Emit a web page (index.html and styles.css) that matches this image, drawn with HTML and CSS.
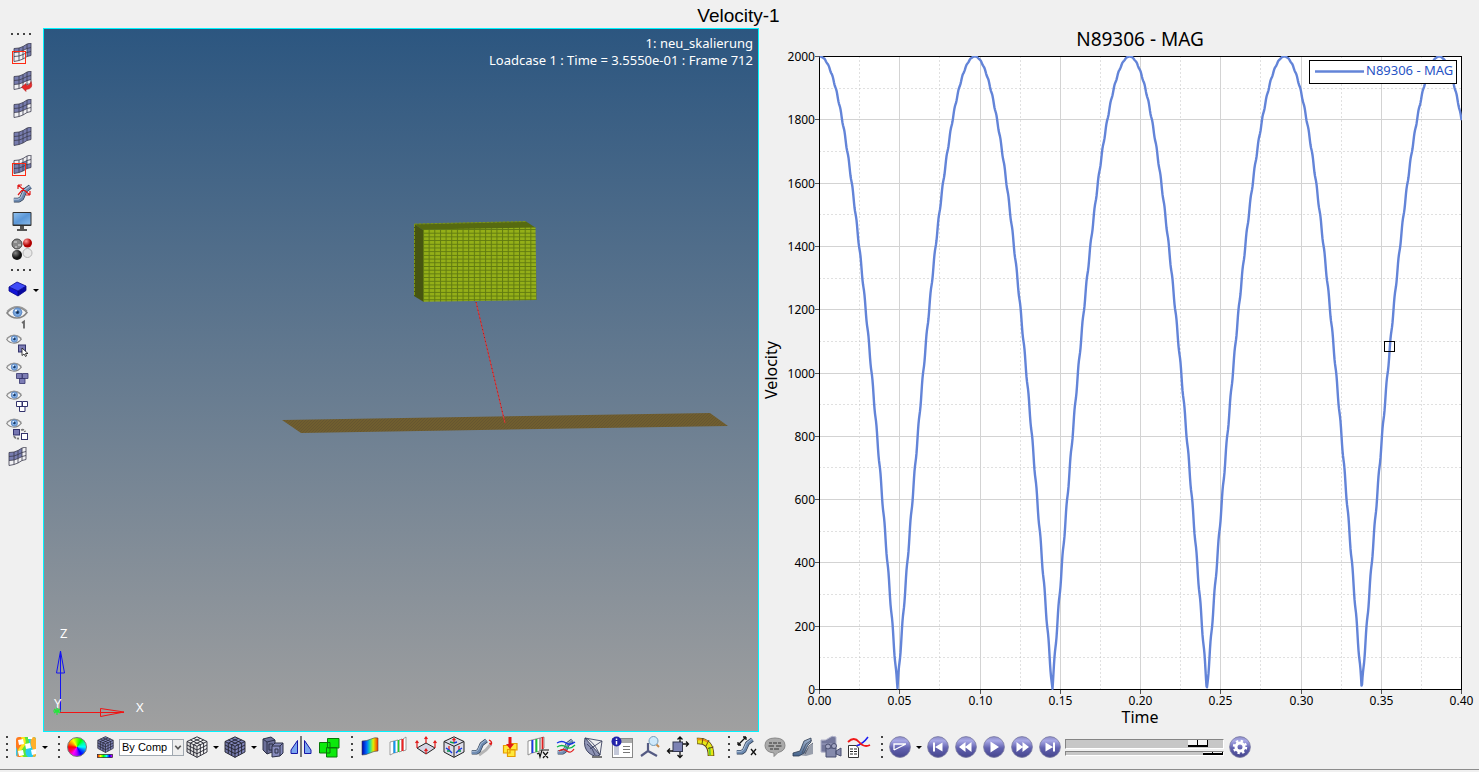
FILE: index.html
```html
<!DOCTYPE html>
<html lang="en">
<head>
<meta charset="utf-8">
<title>Velocity-1</title>
<link rel="stylesheet" href="styles.css">
</head>
<body>
<svg class="defs" aria-hidden="true">
  <defs>
    <linearGradient id="ball" x1="0" y1="0" x2="0" y2="1"><stop offset="0" stop-color="#8c8cc8"/><stop offset=".2" stop-color="#a9a9e6"/><stop offset=".55" stop-color="#6262b0"/><stop offset="1" stop-color="#45458c"/></linearGradient>
    <linearGradient id="rainbow"><stop offset="0" stop-color="#0000b0"/><stop offset=".3" stop-color="#0070ff"/><stop offset=".5" stop-color="#20e0a0"/><stop offset=".7" stop-color="#e0f000"/><stop offset="1" stop-color="#ff3000"/></linearGradient>
    <linearGradient id="spectrum"><stop offset="0" stop-color="red"/><stop offset=".2" stop-color="#ff0"/><stop offset=".4" stop-color="#0f0"/><stop offset=".6" stop-color="#0ff"/><stop offset=".8" stop-color="#00f"/><stop offset="1" stop-color="#f0f"/></linearGradient>
    <linearGradient id="steel" x1="0" y1="0" x2="0" y2="1"><stop offset="0" stop-color="#a3b6cf"/><stop offset="1" stop-color="#45638c"/></linearGradient>
    <linearGradient id="sky" x1="0" y1="0" x2="1" y2="1"><stop offset="0" stop-color="#8fc0ee"/><stop offset=".5" stop-color="#5b97d8"/><stop offset="1" stop-color="#86b8e8"/></linearGradient>
    <radialGradient id="iris"><stop offset="0" stop-color="#123"/><stop offset=".3" stop-color="#2c5590"/><stop offset=".5" stop-color="#85b4ea"/><stop offset="1" stop-color="#5a83bd"/></radialGradient>
    <radialGradient id="dark" cx=".35" cy=".3"><stop offset="0" stop-color="#888"/><stop offset="1" stop-color="#111"/></radialGradient>
    <radialGradient id="red" cx=".35" cy=".3"><stop offset="0" stop-color="#ff9a9a"/><stop offset="1" stop-color="#b00000"/></radialGradient>
    <symbol id="sheet-lines" viewBox="0 0 22 22"><path d="M3 5.500L8 5 12 3.500 16 1 20 0M3 9.500L8 9 12 7.500 16 5.500 20 4.500M3 13.500L8 13 12 11.500 16 9.500 20 8.500M3 18.500L8 17.500 12 16 16 13.500 20 12.500M3 5.500V18.500M8 5V17.500M12 3.500V16M16 1V13.500M20 0V12.500" fill="none" stroke="#3b3b4c" stroke-width=".8"/></symbol>
    <symbol id="sheet" viewBox="0 0 22 22"><path d="M3 5.500L8 5 12 3.500 16 1 20 0V12.500L16 13.500 12 16 8 17.500 3 18.500Z" fill="#f1f1f4"/></symbol>
    <symbol id="eye" viewBox="0 0 22 14"><path d="M1 7Q5 1.500 11 1.500T21 6.500Q17 12 11 12T1 7Z" fill="#f4f4f4" stroke="#858585" stroke-width="1.600"/><path d="M1 5.500Q6 .8 11 .8T21 5" fill="none" stroke="#999" stroke-width="1.400"/><circle cx="11.500" cy="6.300" r="4.800" fill="url(#iris)"/><circle cx="10" cy="4.500" r="1" fill="#fff"/></symbol>
    <symbol id="cube" viewBox="0 0 22 22"><path d="M1 5.500L11 .8 21 5.500V16L11 21.400 1 16Z" fill="currentColor"/><path d="M1 5.500L11 10.300V21.400L1 16Z" fill="#000" fill-opacity=".1"/><path d="M1 5.500L11 .8 21 5.500V16L11 21.400 1 16ZM1 5.500L11 10.300 21 5.500M11 10.300V21.400M4.300 4L14.300 8.700V19.600M7.700 2.400L17.600 7.100V17.800M17.700 4L7.700 8.700V19.600M14.300 2.400L4.300 7.100V17.800M1 9L11 14 21 9M1 12.500L11 17.700 21 12.500" fill="none" stroke="#22222e" stroke-width=".9"/></symbol>
    <symbol id="disc" viewBox="0 0 22 22"><circle cx="11" cy="11" r="10.400" fill="url(#ball)" stroke="#77779f" stroke-width=".8"/></symbol>
    <symbol id="tube" viewBox="0 0 22 22"><path d="M1 18H7L10 16 14 7 20 2.500" fill="none" stroke="#2c3b50" stroke-width="5.600" stroke-linejoin="round"/><path d="M1 18H7L10 16 14 7 20 2.500" fill="none" stroke="#6d8ab0" stroke-width="4" stroke-linejoin="round"/><path d="M1 17H6L9 15 13 6.500 19 2" fill="none" stroke="#adc0d8" stroke-width="1.200"/></symbol>
  </defs>
</svg>

<h1 class="page-title">Velocity-1</h1>

<main class="workspace">
  <nav class="side" aria-label="Visibility tools">
    <span class="grip grip-row"><i></i><i></i><i></i><i></i></span>
    <button class="tool" aria-label="Mask window"><svg viewBox="0 0 22 22"><use href="#sheet"/><path d="M3 5.500L8 5 12 3.500 16 1 20 0V12.500L16 13.500V5.500L12 7.500 8 9 3 9.500Z" fill="#777caf"/><use href="#sheet-lines"/><rect x="1.500" y="8.500" width="13" height="12" fill="none" stroke="#ff2a14"/></svg></button>
    <button class="tool" aria-label="Reverse mask"><svg viewBox="0 0 22 22"><use href="#sheet"/><path d="M3 5.500L8 5 12 3.500 16 1 20 0V8.500L12 11.500 8 13V13L3 13.500Z" fill="#777caf"/><use href="#sheet-lines"/><path d="M10.500 16L15 12.500V14.500Q19 15 20 10.500 23 18 15 18.500V20.500Z" fill="#e52b2b" stroke="#b01515" stroke-width=".5"/></svg></button>
    <button class="tool" aria-label="Mask selection"><svg viewBox="0 0 22 22"><use href="#sheet"/><path d="M3 5.500L8 5 12 3.500 16 1 20 0V4.500L16 5.500V9.500L12 11.500 8 13 3 13.500Z" fill="#777caf"/><use href="#sheet-lines"/></svg></button>
    <button class="tool" aria-label="Show all"><svg viewBox="0 0 22 22"><path d="M3 5.500L8 5 12 3.500 16 1 20 0V12.500L16 13.500 12 16 8 17.500 3 18.500Z" fill="#777caf"/><use href="#sheet-lines"/></svg></button>
    <button class="tool" aria-label="Unmask window"><svg viewBox="0 0 22 22"><use href="#sheet"/><path d="M3 9.500L8 9 12 7.500 16 5.500V9.500L20 8.500V12.500L16 13.500 12 16 8 17.500 3 18.500Z" fill="#777caf"/><use href="#sheet-lines"/><rect x="1.500" y="8.500" width="13" height="12" fill="none" stroke="#ff2a14"/></svg></button>
    <button class="tool" aria-label="Measure path"><svg viewBox="0 0 22 22"><use href="#tube" x="2" y="1" width="19" height="20"/><path d="M7 2L19 12M7 2H11M7 2V6M19 12V8M19 12H15M7 12L13 5" stroke="#e01818" stroke-width="1.200" fill="none"/></svg></button>
    <button class="tool" aria-label="Display"><svg viewBox="0 0 22 22"><rect x="1.500" y="1" width="19" height="14" rx="1" fill="#303030"/><rect x="2.500" y="2" width="17" height="11.500" fill="url(#sky)"/><path d="M9 15H13V18H16V20H6V18H9Z" fill="#555"/></svg></button>
    <button class="tool" aria-label="Materials"><svg viewBox="0 0 22 22"><circle cx="6" cy="5" r="5" fill="#888" stroke="#444"/><path d="M3 3H6M7 6H10M4 8H6" stroke="#ddd"/><circle cx="16.500" cy="4" r="4.500" fill="url(#red)"/><circle cx="6" cy="16" r="5" fill="url(#dark)"/><circle cx="16.500" cy="14" r="4.500" fill="#e8e8e8" stroke="#b5b5b5"/></svg></button>
    <span class="grip grip-row"><i></i><i></i><i></i><i></i></span>
    <div class="side-group">
      <div class="tool-row"><button class="tool" aria-label="Shaded part"><svg viewBox="0 0 22 22"><path d="M3 8L11 3 20 7 12 12Z" fill="#3f4bf8"/><path d="M3 8V12L12 17V12Z" fill="#1414d8"/><path d="M12 12V17L20 11.500V7Z" fill="#0808a0"/><path d="M3 8L11 3 20 7V11.500L12 17 3 12ZM3 8L12 12 20 7M12 12V17" fill="none" stroke="#05058a" stroke-width=".8"/></svg></button><button class="caret" aria-label="Shading options"></button></div>
      <button class="tool" aria-label="Isolate one"><svg viewBox="0 0 22 22"><use href="#eye" x="0" y="-1" width="22" height="14"/><path d="M16 16L18 14.500V21.500" fill="none" stroke="#666" stroke-width="1.800"/></svg></button>
      <button class="tool" aria-label="Hide picked"><svg viewBox="0 0 22 22"><use href="#eye" x="0" y="-1" width="16" height="11"/><rect x="12.500" y="10" width="7" height="7" fill="#7d7db5" stroke="#33336c"/><path d="M16 13V20.500L18 19 19.500 21.500 20.500 21 19.500 18.500H22Z" fill="#fff" stroke="#111" stroke-width=".8"/></svg></button>
      <button class="tool" aria-label="Show linked"><svg viewBox="0 0 22 22"><use href="#eye" x="0" y="-1" width="16" height="11"/><path d="M10.500 10.500H16V15.500H10.500ZM16.500 10.500H22V15.500H16.500ZM13.500 15.500H19V20.500H13.500Z" fill="#7d7db5" stroke="#33336c" stroke-width=".8"/></svg></button>
      <button class="tool" aria-label="Hide linked"><svg viewBox="0 0 22 22"><use href="#eye" x="0" y="-1" width="16" height="11"/><path d="M10.500 10.500H16V15.500H10.500ZM16.500 10.500H21.500V15.500H16.500ZM13.500 15.500H19V20.500H13.500Z" fill="#fff" stroke="#33336c"/></svg></button>
      <button class="tool" aria-label="Swap visibility"><svg viewBox="0 0 22 22"><use href="#eye" x="0" y="-1" width="16" height="11"/><rect x="7.500" y="10.500" width="6" height="5.500" fill="#7777b2" stroke="#33336c"/><rect x="15.500" y="14.500" width="6" height="6" fill="#fff" stroke="#33336c"/><path d="M15 11Q18.500 10 19 13M8 17Q9 20 13 19.500" fill="none" stroke="#777" stroke-width="1.800" stroke-dasharray="3 1"/></svg></button>
      <button class="tool" aria-label="Element mask"><svg viewBox="0 0 22 22"><use href="#sheet"/><path d="M3 5.500L8 5 12 3.500 16 1V9.500L12 11.500 8 13 3 13.500Z" fill="#777caf"/><use href="#sheet-lines"/></svg></button>
    </div>
  </nav>

  <section class="viewport" aria-label="Model view">
    <svg class="scene" viewBox="44 29 714 702" preserveAspectRatio="none">
      <defs><pattern id="mesh" x="423" y="229" width="5.650" height="3.700" patternUnits="userSpaceOnUse"><rect width="5.650" height="3.700" fill="#94af18"/><path d="M0 .5H5.650M.5 0V3.700" stroke="#607a10"/></pattern>
      <pattern id="plate" width="3" height="3" patternUnits="userSpaceOnUse"><rect width="3" height="3" fill="#705e2f"/><path d="M0 3L3 0" stroke="#615330" stroke-width=".7"/></pattern></defs>
      <path d="M282 420L710 413 728 426 301 433Z" fill="url(#plate)"/>
      <path d="M414 224L526 221.500 536 228 423 230Z" fill="#566a10"/>
      <path d="M414 224L423 230V301.500L414 296Z" fill="#475511"/>
      <path d="M423 229.500L535.500 227.500 536.500 300 423 301.800Z" fill="url(#mesh)"/>
      <path d="M414.500 224L526 221.500M414.500 224V296" fill="none" stroke="#7c9418" stroke-dasharray="3 1"/>
      <path d="M476 302L505 423" stroke="#e33a3a" stroke-width="1"/><path d="M476 302L505 423" stroke="#9c1c20" stroke-width="1" stroke-dasharray="1 3"/>
      <path d="M60.500 651V712" stroke="#1414f0"/><path d="M60.500 651L56.500 673H64.500Z" fill="none" stroke="#1414f0"/>
      <path d="M60 712.500H124" stroke="#f01414"/><path d="M124 712L100.500 708.500V716.500Z" fill="none" stroke="#f01414"/>
      <path d="M54 709L60 713M54 713L60 709M57 707V715M53 711H61" stroke="#22e83a" stroke-width="1.200"/>
      <g class="axis-names"><text x="60" y="638">Z</text><text x="54" y="708">Y</text><text x="136" y="712">X</text></g>
    </svg>
    <div class="view-info"><div>1: neu_skalierung</div><div>Loadcase 1 : Time = 3.5550e-01 : Frame 712</div></div>
  </section>

  <section class="chart" aria-label="Velocity plot">
    <svg class="plot" viewBox="759 28 720 704" preserveAspectRatio="none">
      <clipPath id="area"><rect x="819" y="56" width="643" height="634"/></clipPath>
      <rect x="819.500" y="56.500" width="642" height="633" fill="#fff"/>
      <path id="minor" class="minor"/><path id="major" class="major"/>
      <rect class="frame" x="819.500" y="56.500" width="642" height="633"/>
      <path id="ticks" class="ticks"/>
      <path id="curve" class="curve" clip-path="url(#area)"/>
      <rect x="1384.500" y="341.500" width="10" height="10" fill="none" stroke="#000"/>
      <rect x="1309.500" y="60.500" width="147" height="23" fill="#fff" stroke="#000"/>
      <path class="curve" d="M1315 71.500H1364"/>
      <text class="legend" x="1366" y="75">N89306 - MAG</text>
      <text class="chart-title" x="1140" y="46">N89306 - MAG</text>
      <text class="axis-title" x="1140" y="723">Time</text>
      <text class="axis-title" transform="translate(777 370) rotate(-90)">Velocity</text>
      <g id="xlabels" class="xlabels"></g><g id="ylabels" class="ylabels"></g>
    </svg>
  </section>
</main>

<footer class="bottom">
  <span class="grip first"><i></i><i></i><i></i><i></i></span>
  <button class="tool" aria-label="Contour"><svg viewBox="0 0 22 22"><clipPath id="tile"><rect x="1" y="1" width="20" height="20" rx="3"/></clipPath><g clip-path="url(#tile)"><path d="M0 0H22V22H0Z" fill="#ff7a1c"/><path d="M5 0Q10 6 5 11T7 22H22V0Z" fill="#ffe81c"/><path d="M9 0Q13 7 8 12T10 22H22V0Z" fill="#5be63a"/><path d="M12 0Q16 7 12 12T14 22H22V0Z" fill="#23cdf0"/><path d="M17 0Q14 7 17 12T17 22H22V0Z" fill="#ffb02a"/><path d="M0 10Q4 13 2 22H0Z" fill="#35c9e8"/><path d="M3 4L8 3 9 8 4 9ZM10 8L15 7 16 12 11 13ZM3 15L8 14 9 19 4 20ZM16 14L21 13 21 18 17 19ZM13 0H18L17 3H13Z" fill="#fff"/></g></svg></button><button class="caret" aria-label="Contour options"></button>
  <span class="grip"><i></i><i></i><i></i><i></i></span>
  <button class="tool" aria-label="Colours"><span class="wheel"></span></button>
  <button class="tool" aria-label="Colour by"><svg viewBox="0 0 22 22"><use href="#cube" class="blue" x="3" y="0" width="17" height="17"/><rect x="3.500" y="18.500" width="15" height="3" fill="url(#spectrum)" stroke="#222" stroke-width=".7"/></svg></button>
  <label class="combo"><select aria-label="Colour mode"><option>By Comp</option></select><svg viewBox="0 0 11 16" aria-hidden="true"><path d="M2.500 6L5.500 9.500 8.500 6" fill="none" stroke="#555" stroke-width="1.800"/></svg></label>
  <button class="tool" aria-label="Wireframe"><svg viewBox="0 0 22 22"><use href="#cube" class="clear"/></svg></button><button class="caret" aria-label="Wireframe options"></button>
  <button class="tool" aria-label="Shaded mesh"><svg viewBox="0 0 22 22"><use href="#cube" class="blue"/></svg></button><button class="caret" aria-label="Mesh options"></button>
  <button class="tool" aria-label="Section"><svg viewBox="0 0 22 22"><path d="M1 3L9 1 13 4V15L5 18 1 14Z" fill="#6c7099" stroke="#2d3047"/><path d="M5 6L13 4M5 6V18M1 3L5 6M7 8H11V14H7Z" fill="none" stroke="#2d3047"/><path d="M10 10L13 7H21V17L18 20 10 21Z" fill="#858abb" stroke="#2d3047"/><path d="M10 10L18 10 21 7M18 10V20M13 13H16V17H13Z" fill="none" stroke="#2d3047"/></svg></button>
  <button class="tool" aria-label="Mirror"><svg viewBox="0 0 22 22"><path d="M1 17.500V14L7.500 4.500V17.500Z" fill="#7ba6f0" stroke="#1616a6"/><path d="M21 17.500V14L14.500 4.500V17.500Z" fill="#7ba6f0" stroke="#1616a6"/><path d="M11 0V21" stroke="#000"/></svg></button>
  <button class="tool" aria-label="Groups"><svg viewBox="0 0 22 22"><path d="M9.500 2.500H21V12H9.500ZM1.500 6.500H12V17H1.500ZM8.500 11.500H19V21H8.500Z" fill="#0cea0c" stroke="#097809" stroke-width="1"/></svg></button>
  <span class="grip"><i></i><i></i><i></i><i></i></span>
  <button class="tool" aria-label="Contour plot"><svg viewBox="0 0 22 22"><path d="M3 5Q8 5 12 3T19 2V15Q15 15 11 17T3 19Z" fill="url(#rainbow)" stroke="#444" stroke-width=".6"/></svg></button>
  <button class="tool" aria-label="Iso plot"><svg viewBox="0 0 22 22"><path d="M3 6L7 5V17L3 19ZM7 5L11 4V16L7 17ZM12 4L15 3V15L12 16ZM16 3L19 1V14L16 15Z" fill="#fff" stroke="#888" stroke-width=".8"/><path d="M7.500 5V17" stroke="#19e" stroke-width="2"/><path d="M11.500 4V16" stroke="#2c2" stroke-width="1.500"/><path d="M15.500 3V15" stroke="#e22" stroke-width="2"/></svg></button>
  <button class="tool" aria-label="Vector plot"><svg viewBox="0 0 22 22"><path d="M2 12L11 7 20 12 11 18Z" fill="#d5d5e5" stroke="#222"/><path d="M2 12V5M.500 7L2 5 3.500 7M20 12V5M18.500 7L20 5 21.500 7M11 7V1M9.500 3L11 1 12.500 3M11 18V13M9.500 15L11 13 12.500 15" fill="none" stroke="#e01818" stroke-width="1.200"/></svg></button>
  <button class="tool" aria-label="Tensor plot"><svg viewBox="0 0 22 22"><path d="M1 5.500L11 .8 21 5.500V16L11 21.400 1 16Z" fill="#dcdce8" stroke="#222"/><path d="M1 5.500L11 10.300 21 5.500M11 10.300V21" fill="none" stroke="#222"/><path d="M11 7V3M9.500 4L11 2.500 12.500 4M6 14V10M16 14V10" fill="none" stroke="#e01818" stroke-width="1.200"/><path d="M11 7L14 6M6 14L3 12M6 14L9 17M16 14L19 12M16 14L13 17" stroke="#1438e0" stroke-width="1.400"/><path d="M11 7L7 6M4 15H7M15 15H18" stroke="#0a9a4c" stroke-width="1.400"/></svg></button>
  <button class="tool" aria-label="Deformed shape"><svg viewBox="0 0 22 22"><path d="M8 19L15 14 20 8" fill="none" stroke="#b5b5b5" stroke-width="3"/><use href="#tube" x="0" y="2" width="17" height="18"/><path d="M18 4Q21 5 20.500 8M18.500 7L20.500 9" fill="none" stroke="#e01818" stroke-width="1.300"/></svg></button>
  <button class="tool" aria-label="Loads"><svg viewBox="0 0 22 22"><path d="M11.500 7.500H18V14H11.500ZM4.500 9.500H11V17H4.500ZM8.500 13.500H16V20.500H8.500Z" fill="#ffe93b" stroke="#e59b00" stroke-width="1.200"/><path d="M9.500 1H12.500V8H15L11 13 7 8H9.500Z" fill="#e01818"/></svg></button>
  <button class="tool" aria-label="Derived result"><svg viewBox="0 0 22 22"><path d="M1 5L5 4V17L1 19ZM5 4L9 3V16L5 17ZM9 3L13 2V15L9 16ZM13 2L17 1V12L13 15Z" fill="#fff" stroke="#777" stroke-width=".8"/><path d="M5.500 4V17" stroke="#1c38e8" stroke-width="1.800"/><path d="M9.500 3V16" stroke="#1bc43a" stroke-width="1.800"/><path d="M15.500 1V13" stroke="#e02222" stroke-width="1.800"/><path d="M10 18L12 17 13 21 15 14H22M16 16L21 22M21 16L16 22" fill="none" stroke="#111" stroke-width="1.200"/></svg></button>
  <button class="tool" aria-label="Streamlines"><svg viewBox="0 0 22 22"><use href="#tube" x="2" y="1" width="17" height="20"/><path d="M2 7Q7 4 11 7T20 6" fill="none" stroke="#1234e8" stroke-width="1.300"/><path d="M2 11Q7 8 11 11T20 9" fill="none" stroke="#10b848" stroke-width="1.300"/><path d="M4 15Q8 12 12 15T19 13" fill="none" stroke="#e21c1c" stroke-width="1.300"/></svg></button>
  <button class="tool" aria-label="Tracking"><svg viewBox="0 0 22 22"><path d="M2 2Q0 12 6 17T17 19Z" fill="#8f94b4" stroke="#3c4260"/><path d="M2 2Q10 4 17 19M2 2L19 5 17 19M7 13L19 5M4 8Q10 12 12 19" fill="none" stroke="#3c4260" stroke-width=".9"/><path d="M9 20H19V22H9Z" fill="#777"/></svg></button>
  <button class="tool" aria-label="Information"><svg viewBox="0 0 22 22"><rect x="1.500" y="2.500" width="20" height="19" fill="#fff" stroke="#888"/><rect x="2" y="3" width="19" height="4" fill="#aaa"/><path d="M3 10H8V19H3Z" fill="#c4c8d8"/><path d="M12 10.500H19M12 13.500H19M12 16.500H19" stroke="#777"/><circle cx="5.500" cy="5.500" r="5" fill="#2222aa"/><path d="M5.500 5V8.500M5.500 2.500V4" stroke="#fff" stroke-width="1.500"/></svg></button>
  <button class="tool" aria-label="Find system"><svg viewBox="0 0 22 22"><path d="M9 7V15L2 20M9 15L18 20" fill="none" stroke="#555b83" stroke-width="2.200"/><path d="M17 8L20 11" stroke="#c88a4a" stroke-width="2"/><circle cx="14.500" cy="5" r="4.500" fill="#cfe9fb" stroke="#749bb8"/></svg></button>
  <button class="tool" aria-label="Transform"><svg viewBox="0 0 22 22"><rect x="6" y="6" width="9.500" height="9.500" fill="#7c82b4" stroke="#333850"/><path d="M13 6V1M10.500 3.500L13 1 15.500 3.500M16 8H21.500M19 5.500L21.500 8 19 10.500M6 15H.500M3 12.500L.500 15 3 17.500M13 16V21.500M10.500 19L13 21.500 15.500 19" fill="none" stroke="#111" stroke-width="1.300"/></svg></button>
  <button class="tool" aria-label="Bend result"><svg viewBox="0 0 22 22"><path d="M2 5Q16 4 16 20" fill="none" stroke="#573d12" stroke-width="6.600"/><path d="M2.500 5Q16 4 16 19.500" fill="none" stroke="#e5e816" stroke-width="5"/><path d="M2.500 3.500Q9 3 13 6" fill="none" stroke="#ec8a1a" stroke-width="1.800"/><path d="M14.500 11L15 19" fill="none" stroke="#63cf2b" stroke-width="1.800"/><path d="M8 2L7 8M14 4L11 10M18.500 11L13 12.500" stroke="#573d12" stroke-width=".9"/></svg></button>
  <span class="grip"><i></i><i></i><i></i><i></i></span>
  <button class="tool" aria-label="Distance"><svg viewBox="0 0 22 22"><use href="#tube" width="18" height="21"/><path d="M2 9L10 1M2 9V6M2 9H5M10 1H7M10 1V4M15 13L20 19M20 13L15 19" fill="none" stroke="#111" stroke-width="1.300"/></svg></button>
  <button class="tool" aria-label="Notes"><svg viewBox="0 0 22 22"><path d="M11 2Q21 2 21 9.500 21 15 14 16.500L10 20.500V17Q1 16 1 9.500 1 2 11 2Z" fill="#aaa" stroke="#888"/><path d="M5 7H8M9 7H13M14 7H17M4.500 10H10M12 10H17.500M6 13H9M10 13H15" stroke="#333" stroke-width="1.200"/></svg></button>
  <button class="tool" aria-label="Trace"><svg viewBox="0 0 22 22"><path d="M5 19L14 14 21 7V18L14 20Z" fill="#999fac"/><path d="M1 17L8 15 12 5 19 2 19 6 16 9 12 17 7 20H1Z" fill="url(#steel)" stroke="#2c3b50" stroke-width=".8"/><path d="M10 17L14 8 20 4M13 18L17 10 21 7" fill="none" stroke="#444b5e" stroke-width=".8"/></svg></button>
  <button class="tool" aria-label="Record view"><svg viewBox="0 0 22 22"><path d="M1 4Q6 5 9 2T16 1V13Q10 13 8 15T1 16Z" fill="#74789c" stroke="#b4b6cc"/><path d="M1 8H14" stroke="#9da0c0"/><path d="M6 12H16V21H6ZM16 15L21 12V20L16 18Z" fill="#858aac" stroke="#494e70"/><circle cx="8" cy="10.500" r="2.500" fill="#a2a5c2" stroke="#494e70"/><circle cx="14" cy="10" r="2.500" fill="#a2a5c2" stroke="#494e70"/></svg></button>
  <button class="tool" aria-label="Plot report"><svg viewBox="0 0 22 22"><path d="M8 10Q15 8 20 1" fill="none" stroke="#1c1cf0" stroke-width="1.500"/><path d="M0 6Q6 0 11 6T22 9" fill="none" stroke="#f01818" stroke-width="1.800"/><path d="M.500 9.500H8L10.500 12V21.500H.500Z" fill="#fff" stroke="#333"/><path d="M2 13H5M6 13H9M2 15.500H5M6 15.500H9M2 18H5M6 18H9" stroke="#222"/></svg></button>
  <span class="grip"><i></i><i></i><i></i><i></i></span>
  <button class="tool" aria-label="Animation mode"><svg viewBox="0 0 22 22"><use href="#disc"/><path d="M5 14V8H17M5 14L16 8.500" fill="none" stroke="#fff" stroke-width="1.300"/></svg></button><button class="caret" aria-label="Animation options"></button>
  <button class="tool" aria-label="First frame"><svg viewBox="0 0 22 22"><use href="#disc"/><path d="M6 6.500H8V15.500H6ZM15.500 6.500V15.500L8 11Z" fill="#fff"/></svg></button>
  <button class="tool" aria-label="Previous frame"><svg viewBox="0 0 22 22"><use href="#disc"/><path d="M10.500 6V16L4 11ZM16.500 6V16L10 11Z" fill="#fff"/></svg></button>
  <button class="tool" aria-label="Play"><svg viewBox="0 0 22 22"><use href="#disc"/><path d="M7.500 5.500V16.500L16 11Z" fill="#fff"/></svg></button>
  <button class="tool" aria-label="Next frame"><svg viewBox="0 0 22 22"><use href="#disc"/><path d="M5.500 6V16L12 11ZM11.500 6V16L18 11Z" fill="#fff"/></svg></button>
  <button class="tool" aria-label="Last frame"><svg viewBox="0 0 22 22"><use href="#disc"/><path d="M14 6.500H16V15.500H14ZM6.500 6.500V15.500L14 11Z" fill="#fff"/></svg></button>
  <div class="sliders"><input class="frame-slider" type="range" min="0" max="801" value="712" aria-label="Frame"><input class="speed-slider" type="range" min="0" max="100" value="100" aria-label="Speed"></div>
  <button class="tool" aria-label="Animation settings"><svg viewBox="0 0 22 22"><use href="#disc"/><circle cx="11" cy="11" r="4" fill="none" stroke="#fff" stroke-width="3"/><circle cx="11" cy="11" r="6" fill="none" stroke="#fff" stroke-width="2.400" stroke-dasharray="2.350 2.350"/></svg></button>
</footer>
<script src="plot.js"></script>
</body>
</html>
```
FILE: styles.css
```css
* { box-sizing: border-box; }

body {
  margin: 0;
  min-height: 100vh;
  display: flex;
  flex-direction: column;
  background: #f0f0f0;
  color: #000;
  font-family: "Noto Sans", "Open Sans", sans-serif;
  font-size: 13px;
}

.defs { position: absolute; width: 0; height: 0; }

.page-title {
  margin: 0;
  padding: 5px 2px 0 0;
  height: 28px;
  font: 400 19px/22px "Liberation Sans", Arial, sans-serif;
  text-align: center;
}

.workspace {
  flex: 1;
  display: grid;
  grid-template-columns: 43px minmax(0, 716fr) minmax(0, 720fr);
}

button {
  padding: 0;
  border: 0;
  background: none;
  font: inherit;
}

.tool {
  flex: none;
  width: 28px;
  height: 28px;
  display: flex;
  align-items: center;
  justify-content: center;
}

.tool svg { display: block; width: 22px; height: 22px; overflow: visible; }
.blue { color: #8186bb; }
.clear { color: #f4f4f4; }

.caret { flex: none; width: 10px; height: 28px; display: flex; align-items: center; justify-content: center; }
.caret::before { content: ""; border: 3px solid transparent; border-top-color: #000; border-bottom: 0; }

.side { display: flex; flex-direction: column; padding-left: 8px; }
.side-group { display: flex; flex-direction: column; margin-left: -5px; }
.tool-row { display: flex; }

.grip {
  flex: none;
  width: 13px;
  height: 22px;
  padding-left: 4px;
  display: flex;
  flex-direction: column;
  align-items: center;
  justify-content: space-between;
}
.grip.first { width: 12px; padding-left: 2px; }
.grip i { width: 2px; height: 2px; background: #444; }
.grip-row { width: 24px; height: 12px; padding: 0 2px; flex-direction: row; margin-left: 1px; }

.viewport {
  position: relative;
  border: 1px solid #00f4ff;
  background: linear-gradient(#2c5680, #a0a0a0);
  color: #fff;
}

.scene, .plot { display: block; width: 100%; height: 100%; overflow: visible; }
.axis-names { font-size: 13px; fill: #fff; }

.view-info {
  position: absolute;
  top: 6px;
  right: 5px;
  line-height: 17px;
  text-align: right;
}

.minor { fill: none; stroke: #c0c0c0; stroke-dasharray: 1 3; }
.major { fill: none; stroke: #d3d3d3; }
.frame { fill: none; stroke: #000; }
.ticks { fill: none; stroke: #555; }
.curve { fill: none; stroke: #6384d8; stroke-width: 2.400px; stroke-linejoin: round; }
.legend { fill: #2854c5; font-size: 13px; }
.chart-title { font-size: 19px; text-anchor: middle; }
.axis-title { font-size: 16px; text-anchor: middle; }
.xlabels { font-size: 12px; text-anchor: middle; }
.ylabels { font-size: 12px; text-anchor: end; }

.bottom {
  display: flex;
  align-items: center;
  height: 38px;
  padding-bottom: 7px;
  margin-bottom: 2px;
  border-bottom: 1px solid #8c8c8c;
}

.wheel {
  width: 20px;
  height: 20px;
  border: 1px solid #777;
  border-radius: 50%;
  background: conic-gradient(#7f0, #0f0, #0fa, #0ff, #06f, #00f, #a0f, #f0f, #f05, red, #f80, #ff0, #7f0);
}

.combo {
  flex: none;
  display: flex;
  width: 65px;
  height: 17px;
  margin-right: -1px;
  border: 1px solid #a0a8b0;
  background: #fff;
}
.combo select {
  flex: 1;
  min-width: 0;
  padding: 0 0 0 2px;
  border: 0;
  appearance: none;
  background: none;
  color: #000;
  font: 11px/15px "Liberation Sans", Arial, sans-serif;
}
.combo svg { width: 11px; border-left: 1px solid #a0a8b0; background: #eee; }

.sliders { width: 159px; margin: 0 2px 0 1px; display: flex; flex-direction: column; gap: 2px; }
.sliders input {
  appearance: none;
  display: block;
  width: 100%;
  margin: 0;
  background: #c7c7c7;
  border: 1px solid;
  border-color: #858585 #fff #fff #858585;
}
.frame-slider { height: 10px; }
.speed-slider { height: 5px; }
.sliders input::-webkit-slider-thumb {
  appearance: none;
  width: 20px;
  height: 7px;
  border: 0;
  border-right: 1px solid #000;
  border-bottom: 2px solid #000;
  background: linear-gradient(90deg, #f5f5f5 9px, #000 9px, #000 10px, #f5f5f5 10px);
}
.sliders .speed-slider::-webkit-slider-thumb { height: 3px; }
```
FILE: plot.js
```
const left = 819.5, top0 = 56.5, width = 642, height = 633;
const svgNs = "http://www.w3.org/2000/svg";
const byId = id => document.getElementById(id);

function label(group, x, y, value) {
  const text = document.createElementNS(svgNs, "text");
  text.setAttribute("x", x);
  text.setAttribute("y", y);
  text.textContent = value;
  byId(group).appendChild(text);
}

let major = "", minor = "", ticks = "";
for (let i = 0; i <= 16; i++) {
  const x = Math.floor(left + width * i / 16) + 0.5;
  if (i % 2) minor += `M${x} ${top0}V${top0 + height}`;
  else {
    if (i > 0 && i < 16) major += `M${x} ${top0}V${top0 + height}`;
    ticks += `M${x} 690V694`;
    label("xlabels", x, 705, (i * 0.025).toFixed(2));
  }
}
for (let i = 0; i <= 20; i++) {
  const y = Math.floor(top0 + height * (20 - i) / 20) + 0.5;
  if (i % 2) minor += `M${left} ${y}H${left + width}`;
  else {
    if (i > 0 && i < 20) major += `M${left} ${y}H${left + width}`;
    ticks += `M815 ${y}H819`;
    label("ylabels", 815, y + 4, i * 100);
  }
}
byId("major").setAttribute("d", major);
byId("minor").setAttribute("d", minor);
byId("ticks").setAttribute("d", ticks);

// Free swing with a small vibration on top of it
const period = 154.8, firstPeak = 820;
let curve = "";
for (let x = left; x <= left + width; x += 0.5) {
  const phase = (x - firstPeak) * Math.PI / period;
  const ripple = 0.005 * Math.sin(phase) * Math.sin((x - left) * Math.PI / 2);
  const v = Math.abs(Math.cos(phase) + ripple);
  curve += `${curve ? "L" : "M"}${x} ${(top0 + height * (1 - v)).toFixed(1)}`;
}
byId("curve").setAttribute("d", curve);
```
